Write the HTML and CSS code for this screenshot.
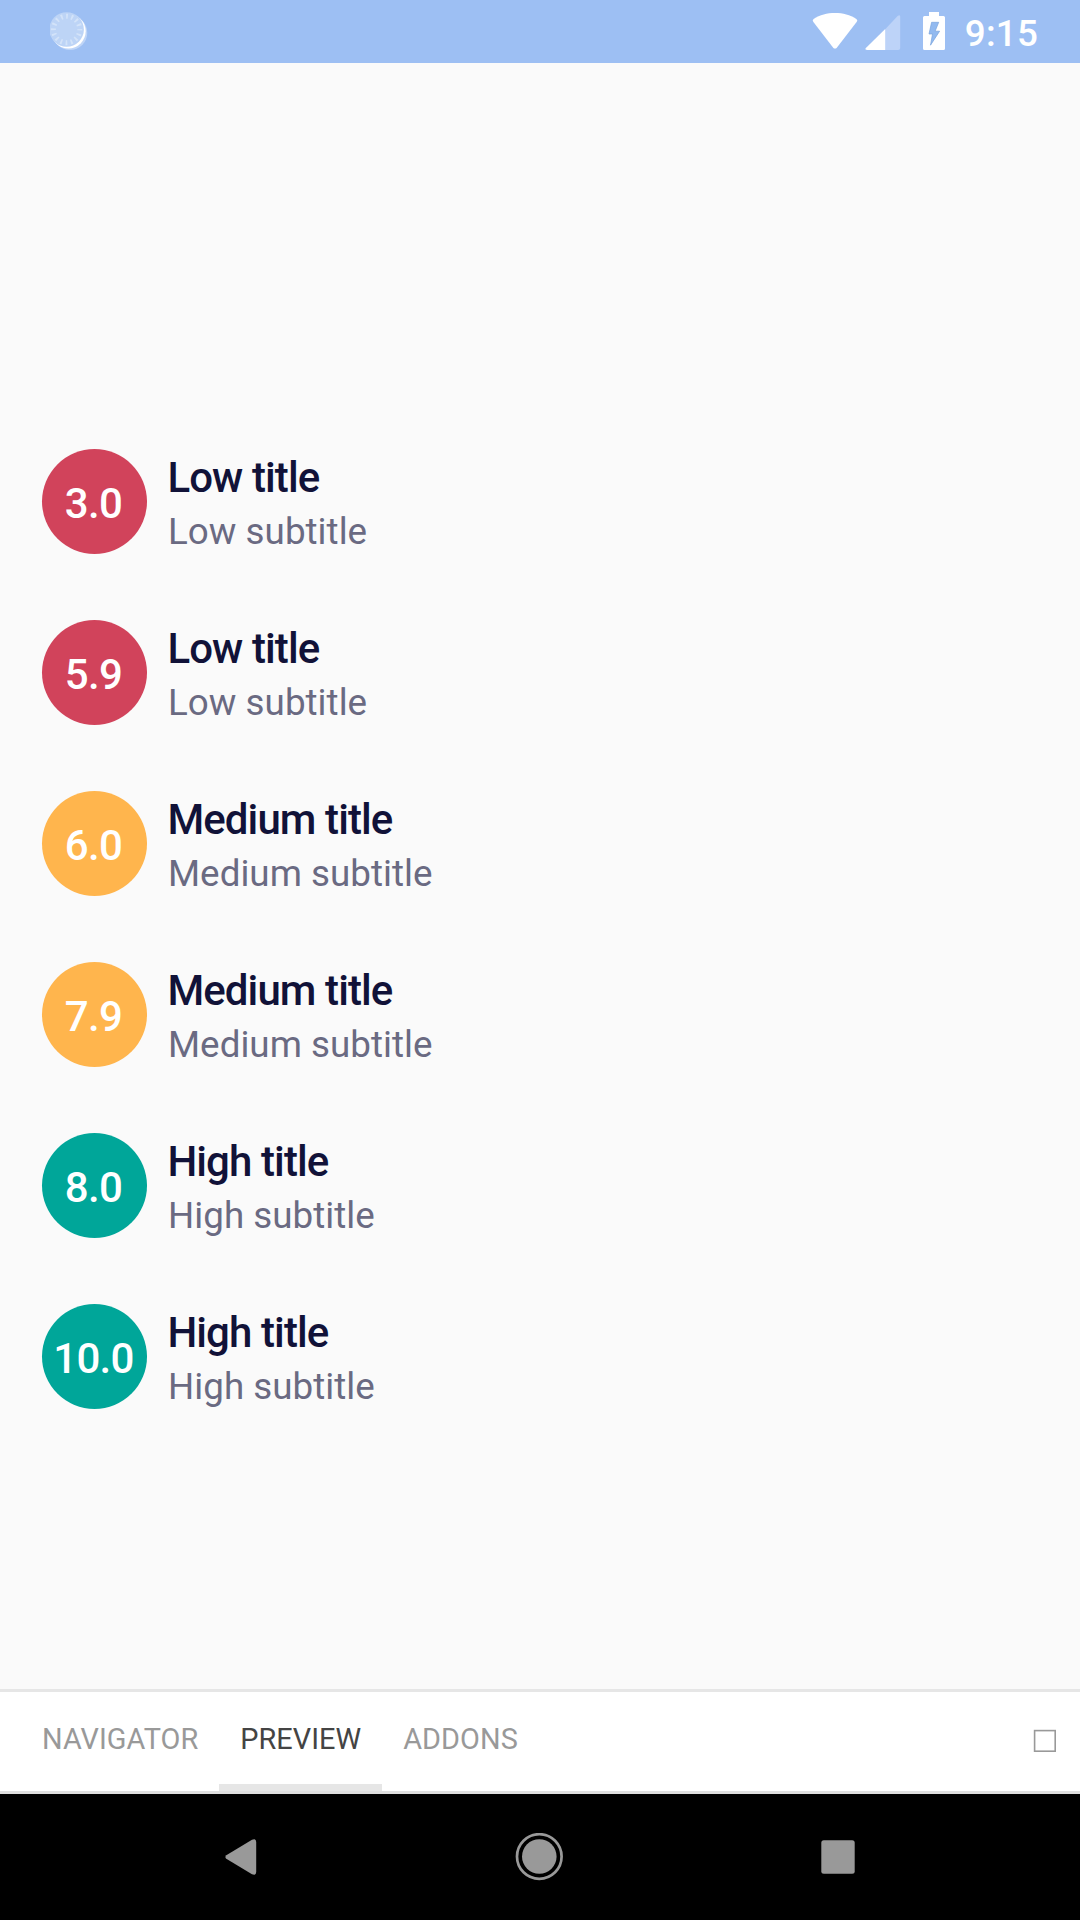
FILE: index.html
```html
<!DOCTYPE html>
<html lang="en">
<head>
<meta charset="utf-8">
<title>Storybook preview</title>
<link rel="stylesheet" href="styles.css">
</head>
<body>
<div class="screen">
  <header class="status-bar">
    <svg class="spinner" width="40" height="40" viewBox="0 0 40 40">
      <circle cx="20" cy="20.800" r="17.300" fill="#fff" opacity=".35"/>
      <circle cx="18.400" cy="19.200" r="17.300" fill="#fff"/>
      <circle cx="16.600" cy="17.500" r="17.300" fill="#bdd4f6"/>
      <circle cx="16.600" cy="17.500" r="13.200" fill="none" stroke="#d3e3f9" stroke-width="5" stroke-dasharray="1.8 3.384" stroke-dashoffset=".9"/>
    </svg>
    <div class="status-icons">
      <svg class="wifi" width="46" height="38" viewBox="0 0 46 38"><path d="M1.2 9.8Q0 8.2 1.6 7.1C8 2.8 15 1 23 1s15 1.800 21.400 6.100Q46 8.200 44.800 9.800L25 35.400q-2 2.400-4 0z" fill="#fff"/></svg>
      <svg class="signal" width="36" height="36" viewBox="0 0 36 36"><path d="M20 14.500 32.600 1.100Q35.200-1 35.200 1.700V33q0 2-2 2H20z" fill="#bdd3f8"/><path d="M20.200 14V35H2Q-.8 34.800.9 32.900z" fill="#fff"/></svg>
      <svg class="battery" width="22" height="38" viewBox="0 0 22 38"><path d="M6 0H16V4H20.500Q22 4 22 5.500V36.500Q22 38 20.500 38H1.500Q0 38 0 36.500V5.500Q0 4 1.500 4H6z" fill="#fff"/><path d="M8.600 10.300H15.700l-3.600 8.900H16.600L7.500 33.200 9.500 22H6z" fill="#92baf0" stroke="#78a4dd" stroke-width=".7"/></svg>
      <span class="clock">9:15</span>
    </div>
  </header>

  <main class="preview">
    <section class="rating low"><div class="score">3.0</div><div class="labels"><div class="title">Low title</div><div class="subtitle">Low subtitle</div></div></section>
    <section class="rating low"><div class="score">5.9</div><div class="labels"><div class="title">Low title</div><div class="subtitle">Low subtitle</div></div></section>
    <section class="rating medium"><div class="score">6.0</div><div class="labels"><div class="title">Medium title</div><div class="subtitle">Medium subtitle</div></div></section>
    <section class="rating medium"><div class="score">7.9</div><div class="labels"><div class="title">Medium title</div><div class="subtitle">Medium subtitle</div></div></section>
    <section class="rating high"><div class="score">8.0</div><div class="labels"><div class="title">High title</div><div class="subtitle">High subtitle</div></div></section>
    <section class="rating high"><div class="score">10.0</div><div class="labels"><div class="title">High title</div><div class="subtitle">High subtitle</div></div></section>
  </main>

  <nav class="tabs">
    <div class="tab">NAVIGATOR</div>
    <div class="tab active">PREVIEW</div>
    <div class="tab">ADDONS</div>
    <svg class="toggle" width="24" height="24" viewBox="0 0 24 24"><rect x="1.600" y="1.600" width="20.600" height="20.600" fill="none" stroke="#999" stroke-width="1.600"/></svg>
  </nav>

  <footer class="system-nav">
    <svg width="32" height="36" viewBox="0 0 32 36"><path d="M1.300 16.200 27 .800Q31.200-.8 31.200 3V33q0 3.800-4.200 2.200L1.300 19.800Q-.5 18 1.300 16.200z" fill="#999"/></svg>
    <svg width="48" height="48" viewBox="0 0 48 48"><circle cx="24.300" cy="23.500" r="22.300" fill="none" stroke="#999" stroke-width="2.700"/><circle cx="24.300" cy="23.500" r="17.300" fill="#999"/></svg>
    <svg width="34" height="34" viewBox="0 0 34 34"><rect x=".3" y=".3" width="33.400" height="33.400" rx="2.500" fill="#999"/></svg>
  </footer>
</div>
</body>
</html>
```

FILE: styles.css
```css
* { box-sizing: border-box; }

body {
  margin: 0;
  font-family: Roboto, sans-serif;
}

svg { display: block; flex: none; }

.screen {
  display: flex;
  flex-direction: column;
  width: 1080px;
  height: 1920px;
  background: #fafafa;
}

.status-bar {
  display: flex;
  justify-content: space-between;
  align-items: flex-start;
  height: 63px;
  padding: 12px 42px 0 50px;
  background: #9dbff3;
}

.status-icons { display: flex; align-items: flex-start; }
.signal { margin: 3px 0 0 7px; }
.battery { margin-left: 22px; }

.clock {
  margin-left: 20px;
  color: #fff;
  font-size: 36.75px;
  font-weight: 500;
  letter-spacing: .2px;
  line-height: 43px;
}

.preview {
  display: flex;
  flex: 1;
  flex-direction: column;
  gap: 66px;
  padding: 386px 42px 0;
}

.rating { display: flex; gap: 21px; height: 105px; }

.score {
  width: 105px;
  height: 105px;
  padding: 4px 2px 0 0;
  border-radius: 50%;
  color: #fff;
  font-size: 42px;
  font-weight: 500;
  letter-spacing: -.7px;
  line-height: 101px;
  text-align: center;
}

.low .score { background: #d1435b; }
.medium .score { background: #ffb54d; }
.high .score { background: #00a699; }

.labels {
  display: flex;
  flex-direction: column;
  gap: 7px;
  padding-top: 4px;
  white-space: nowrap;
}

.title {
  margin-left: -.6px;
  color: #111238;
  font-size: 42px;
  font-weight: 500;
  letter-spacing: -.9px;
  line-height: 49px;
}

.subtitle {
  color: #6a6a82;
  font-size: 36.75px;
  letter-spacing: .03px;
  line-height: 45px;
}

.tabs {
  display: flex;
  height: 105px;
  padding: 0 23px 0 21px;
  border-top: 3px solid #e6e6e6;
  border-bottom: 3px solid #dfdfdf;
  background: #fff;
}

.tab {
  padding: 0 21px;
  border-bottom: 7px solid transparent;
  color: #999;
  font-size: 28.875px;
  letter-spacing: .05px;
  line-height: 95px;
}

.tab.active { border-color: #e6e6e6; color: #444; }
.toggle { margin: 37px 0 0 auto; }

.system-nav {
  display: flex;
  justify-content: space-between;
  align-items: center;
  height: 126px;
  padding: 0 225px;
  background: #000;
}
```
